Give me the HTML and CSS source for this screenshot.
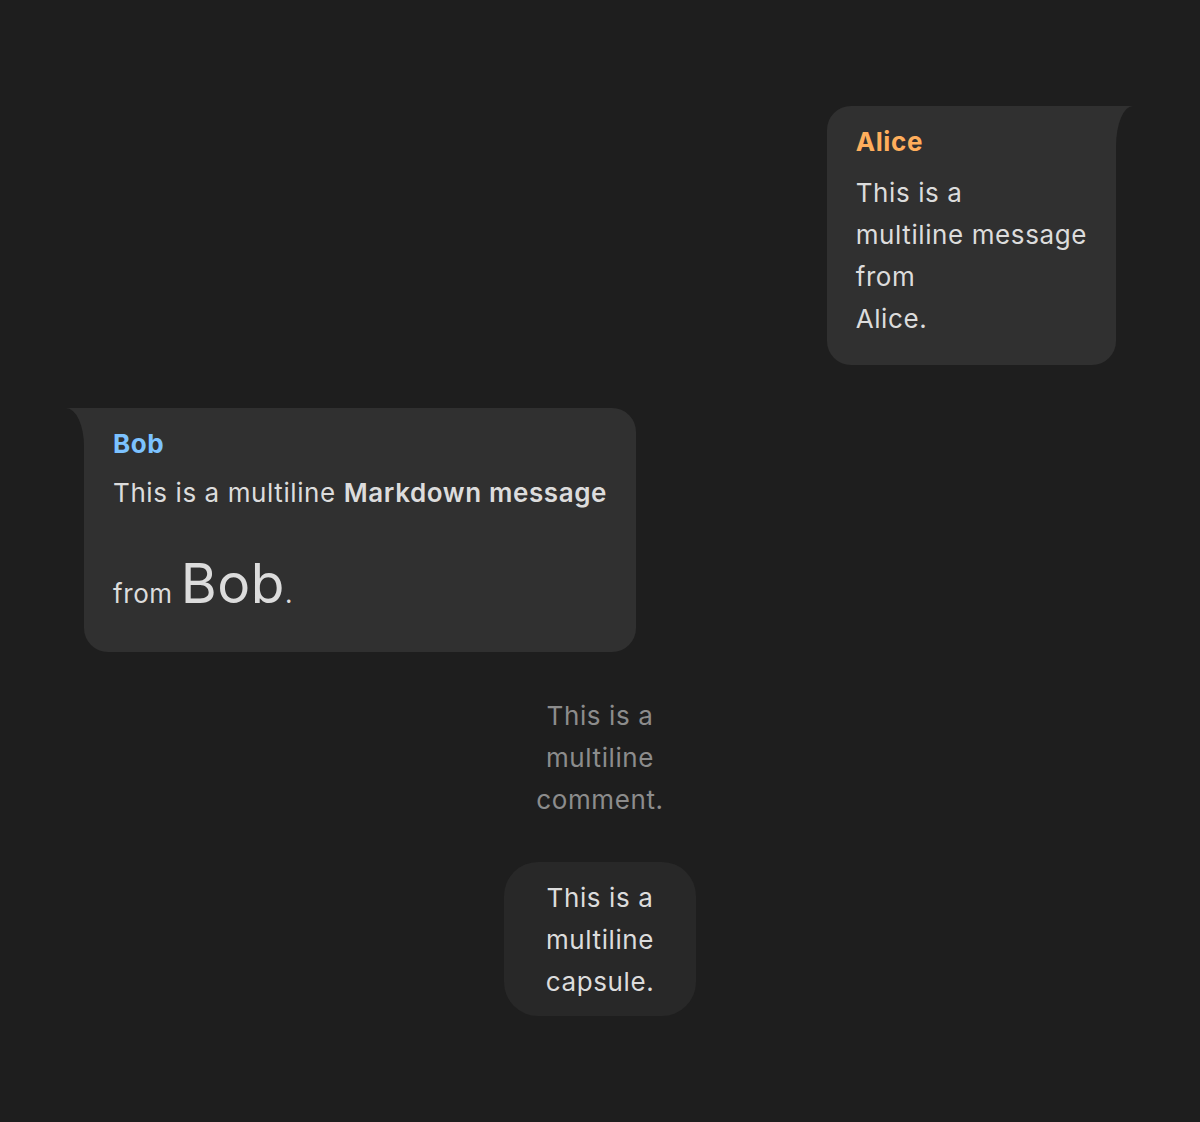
FILE: index.html
```html
<!DOCTYPE html>
<html lang="en">
<head>
<meta charset="utf-8">
<title>Chat</title>
<link rel="stylesheet" href="styles.css">
</head>
<body>
<div class="chat">
  <div class="row row-right">
    <div class="bubble bubble-right">
      <div class="name name-alice">Alice</div>
      <div class="text">This is a<br>multiline message<br>from<br>Alice.</div>
    </div>
  </div>
  <div class="row row-left">
    <div class="bubble bubble-left">
      <div class="name name-bob">Bob</div>
      <div class="md">
        <p>This is a multiline <strong>Markdown message</strong></p>
        <p>from <span class="big">Bob</span>.</p>
      </div>
    </div>
  </div>
  <div class="row row-center row-comment">
    <div class="comment">This is a<br>multiline<br>comment.</div>
  </div>
  <div class="row row-center">
    <div class="capsule">This is a<br>multiline<br>capsule.</div>
  </div>
</div>
</body>
</html>
```
FILE: styles.css
```css
html, body {
  margin: 0;
  padding: 0;
}
body {
  background: #1e1e1e;
  min-height: 1122px;
  font-family: "Inter", "Noto Sans", "DejaVu Sans", sans-serif;
  font-size: 26px;
  line-height: 1.615;
  letter-spacing: 0.023em;
  color: #dcdcdc;
}
.chat {
  display: flex;
  flex-direction: column;
  gap: 43px;
  padding: 106px 84px 40px;
}
.row {
  display: flex;
}
.row-right { justify-content: flex-end; }
.row-left { justify-content: flex-start; }
.row-center { justify-content: center; }
.row-comment { margin-bottom: -2px; }

.bubble {
  position: relative;
  background: #303030;
  padding: 15px 29px 26px;
}
.bubble-right {
  border-radius: 24px 0 24px 24px;
  padding-bottom: 25px;
}
.bubble-right .name { margin-bottom: 9px; }
.bubble-left {
  border-radius: 0 24px 24px 24px;
  padding-bottom: 24px;
}
.bubble-right::before,
.bubble-right::after {
  content: "";
  position: absolute;
  top: 0;
  left: 100%;
  width: 17px;
  height: 40px;
}
.bubble-right::before { background: #303030; }
.bubble-right::after {
  background: #1e1e1e;
  border-top-left-radius: 17px 40px;
}
.bubble-left::before,
.bubble-left::after {
  content: "";
  position: absolute;
  top: 0;
  right: 100%;
  width: 18px;
  height: 38px;
}
.bubble-left::before { background: #303030; }
.bubble-left::after {
  background: #1e1e1e;
  border-top-right-radius: 18px 38px;
}

.name {
  font-weight: 700;
  margin-bottom: 7px;
}
.name-alice { color: #ffae5c; }
.name-bob { color: #7cc2ff; }

.md p { margin: 0; }
.md p + p { margin-top: 25px; }
.md strong { font-weight: 600; }
.big { font-size: 55px; }

.comment {
  color: #8c8c8c;
  text-align: center;
}
.capsule {
  background: #282828;
  width: 192px;
  box-sizing: border-box;
  padding: 15px 0 13px;
  border-radius: 34px;
  text-align: center;
}
```
